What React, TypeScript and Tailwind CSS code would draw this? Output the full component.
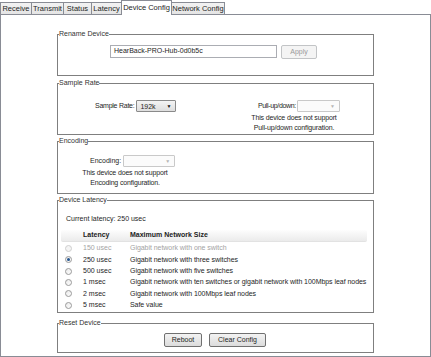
import React from 'react';

const tabs = ['Receive', 'Transmit', 'Status', 'Latency', 'Device Config', 'Network Config'];
const tabWidths = ['w-[32px]', 'w-[33px]', 'w-[29px]', 'w-[31px]', 'w-[51px]', 'w-[54px]'];

const latencies = [
  { value: '150 usec', desc: 'Gigabit network with one switch', disabled: true },
  { value: '250 usec', desc: 'Gigabit network with three switches', checked: true },
  { value: '500 usec', desc: 'Gigabit network with five switches' },
  { value: '1 msec', desc: 'Gigabit network with ten switches or gigabit network with 100Mbps leaf nodes' },
  { value: '2 msec', desc: 'Gigabit network with 100Mbps leaf nodes' },
  { value: '5 msec', desc: 'Safe value' },
];

const Legend = ({ children }: { children: React.ReactNode }) => (
  <legend className="ml-[1px] px-0 leading-[8px] text-[#333]">{children}</legend>
);

const Combo = ({ value, width, disabled }: { value?: string; width: string; disabled?: boolean }) => (
  <div
    className={`${width} shrink-0 h-[12px] flex items-center justify-between pl-[3px] pr-[4px] border rounded-[1px] ${
      disabled ? 'border-[#c9c9c9] bg-[#fbfbfb]' : 'border-[#8a8a8a] bg-gradient-to-b from-[#f4f4f4] to-[#dedede]'
    }`}
  >
    <span className="leading-none">{value}</span>
    <span className={`text-[5px] leading-none ${disabled ? 'text-[#b5b5b5]' : 'text-[#111]'}`}>▼</span>
  </div>
);

const Radio = ({ checked, disabled }: { checked?: boolean; disabled?: boolean }) => (
  <div
    className={`w-[7px] h-[7px] rounded-full border flex items-center justify-center ${
      disabled ? 'border-[#cfcfcf] bg-[#f4f4f4]' : 'border-[#9a9a9a] bg-gradient-to-br from-[#eaeaea] to-[#fdfdfd]'
    }`}
  >
    {checked && <div className="w-[3px] h-[3px] rounded-full bg-[#24558f]" />}
  </div>
);

export default function App() {
  return (
    <div className="w-[431px] h-[357px] bg-white overflow-hidden whitespace-nowrap font-['Liberation_Sans',Arial,sans-serif] text-[7px] text-[#1e1e1e]">
      {/* tab strip */}
      <div className="flex items-end h-[14px]">
        {tabs.map((t, i) =>
          t === 'Device Config' ? (
            <div
              key={t}
              className={`${tabWidths[i]} -ml-[1px] -mb-[1px] relative z-10 h-[15px] flex items-center justify-center bg-white border border-b-0 border-[#898c95] pb-[1px] text-[7.5px]`}
            >
              {t}
            </div>
          ) : (
            <div
              key={t}
              className={`${tabWidths[i]} ${i === 0 ? '' : '-ml-[1px]'} h-[12px] flex items-center justify-center bg-gradient-to-b from-[#f3f3f3] to-[#e4e4e4] border border-b-0 border-[#898c95] text-[7.5px]`}
            >
              {t}
            </div>
          )
        )}
      </div>

      {/* pane */}
      <div className="h-[343px] border border-[#898c95] bg-white">
        <div className="ml-[56px] w-[317px] mt-[15px] flex flex-col">
          {/* Rename Device */}
          <fieldset className="h-[46px] border border-[#7f7f7f] px-0">
            <Legend>Rename Device</Legend>
            <div className="flex mt-[7px] ml-[52px]">
              <div className="w-[167px] h-[13px] border border-[#abadb3] flex items-center pl-[3px]">
                HearBack-PRO-Hub-0d0b5c
              </div>
              <div className="ml-[4px] w-[36px] h-[14px] border border-[#c2c4c6] rounded-[2px] bg-[#f4f4f4] flex items-center justify-center text-[#9a9a9a]">
                Apply
              </div>
            </div>
          </fieldset>

          {/* Sample Rate */}
          <fieldset className="mt-[3px] h-[56px] border border-[#7f7f7f] px-0">
            <Legend>Sample Rate</Legend>
            <div className="flex items-start mt-[13px]">
              <div className="ml-[37px] w-[156px] flex items-center gap-[2px]">
                <span className="tracking-[-0.25px]">Sample Rate:</span>
                <Combo value="192k" width="w-[40px]" />
              </div>
              <div className="w-[86px] flex flex-col items-center">
                <div className="self-start ml-[7px] flex items-center gap-[1px]">
                  <span className="tracking-[-0.35px]">Pull-up/down:</span>
                  <Combo width="w-[43px]" disabled />
                </div>
                <div className="leading-[10px] text-center mt-[1px] tracking-[-0.15px]">
                  This device does not support
                  <br />
                  Pull-up/down configuration.
                </div>
              </div>
            </div>
          </fieldset>

          {/* Encoding */}
          <fieldset className="mt-[2px] h-[57px] border border-[#7f7f7f] px-0">
            <Legend>Encoding</Legend>
            <div className="ml-[22px] w-[90px] mt-[10px] flex flex-col items-center">
              <div className="self-start ml-[10px] flex items-center gap-[2px]">
                <span>Encoding:</span>
                <Combo width="w-[52px]" disabled />
              </div>
              <div className="leading-[10px] text-center mt-[1px] tracking-[-0.15px]">
                This device does not support
                <br />
                Encoding configuration.
              </div>
            </div>
          </fieldset>

          {/* Device Latency */}
          <fieldset className="mt-[2px] h-[117px] border border-[#7f7f7f] px-0">
            <Legend>Device Latency</Legend>
            <div className="mt-[10px] pl-[8px] leading-[10px]">Current latency: 250 usec</div>
            <div className="ml-[3px] w-[306px] mt-[6px]">
              <div className="h-[12px] flex items-center font-bold text-[#222] bg-gradient-to-b from-[#fdfdfd] to-[#ebebeb] border-b border-[#e2e2e2] rounded-[2px]">
                <span className="ml-[22px] w-[47px] shrink-0">Latency</span>
                <span>Maximum Network Size</span>
              </div>
              <div className="mt-[1px]">
                {latencies.map((l) => (
                  <div
                    key={l.value}
                    className={`h-[11.3px] flex items-center ${l.disabled ? 'text-[#a3a3a3]' : ''}`}
                  >
                    <div className="ml-[4px] w-[18px] shrink-0">
                      <Radio checked={l.checked} disabled={l.disabled} />
                    </div>
                    <span className="w-[47px] shrink-0">{l.value}</span>
                    <span className="tracking-[-0.05px]">{l.desc}</span>
                  </div>
                ))}
              </div>
            </div>
          </fieldset>

          {/* Reset Device */}
          <fieldset className="mt-[6px] h-[34px] border border-[#7f7f7f] px-0">
            <Legend>Reset Device</Legend>
            <div className="flex mt-[6px] ml-[106px] gap-[7px]">
              <div className="w-[38px] h-[14px] border border-[#707070] rounded-[2px] bg-gradient-to-b from-[#f3f3f3] to-[#dcdcdc] flex items-center justify-center">
                Reboot
              </div>
              <div className="w-[57px] h-[14px] border border-[#707070] rounded-[2px] bg-gradient-to-b from-[#f3f3f3] to-[#dcdcdc] flex items-center justify-center">
                Clear Config
              </div>
            </div>
          </fieldset>
        </div>
      </div>
    </div>
  );
}
